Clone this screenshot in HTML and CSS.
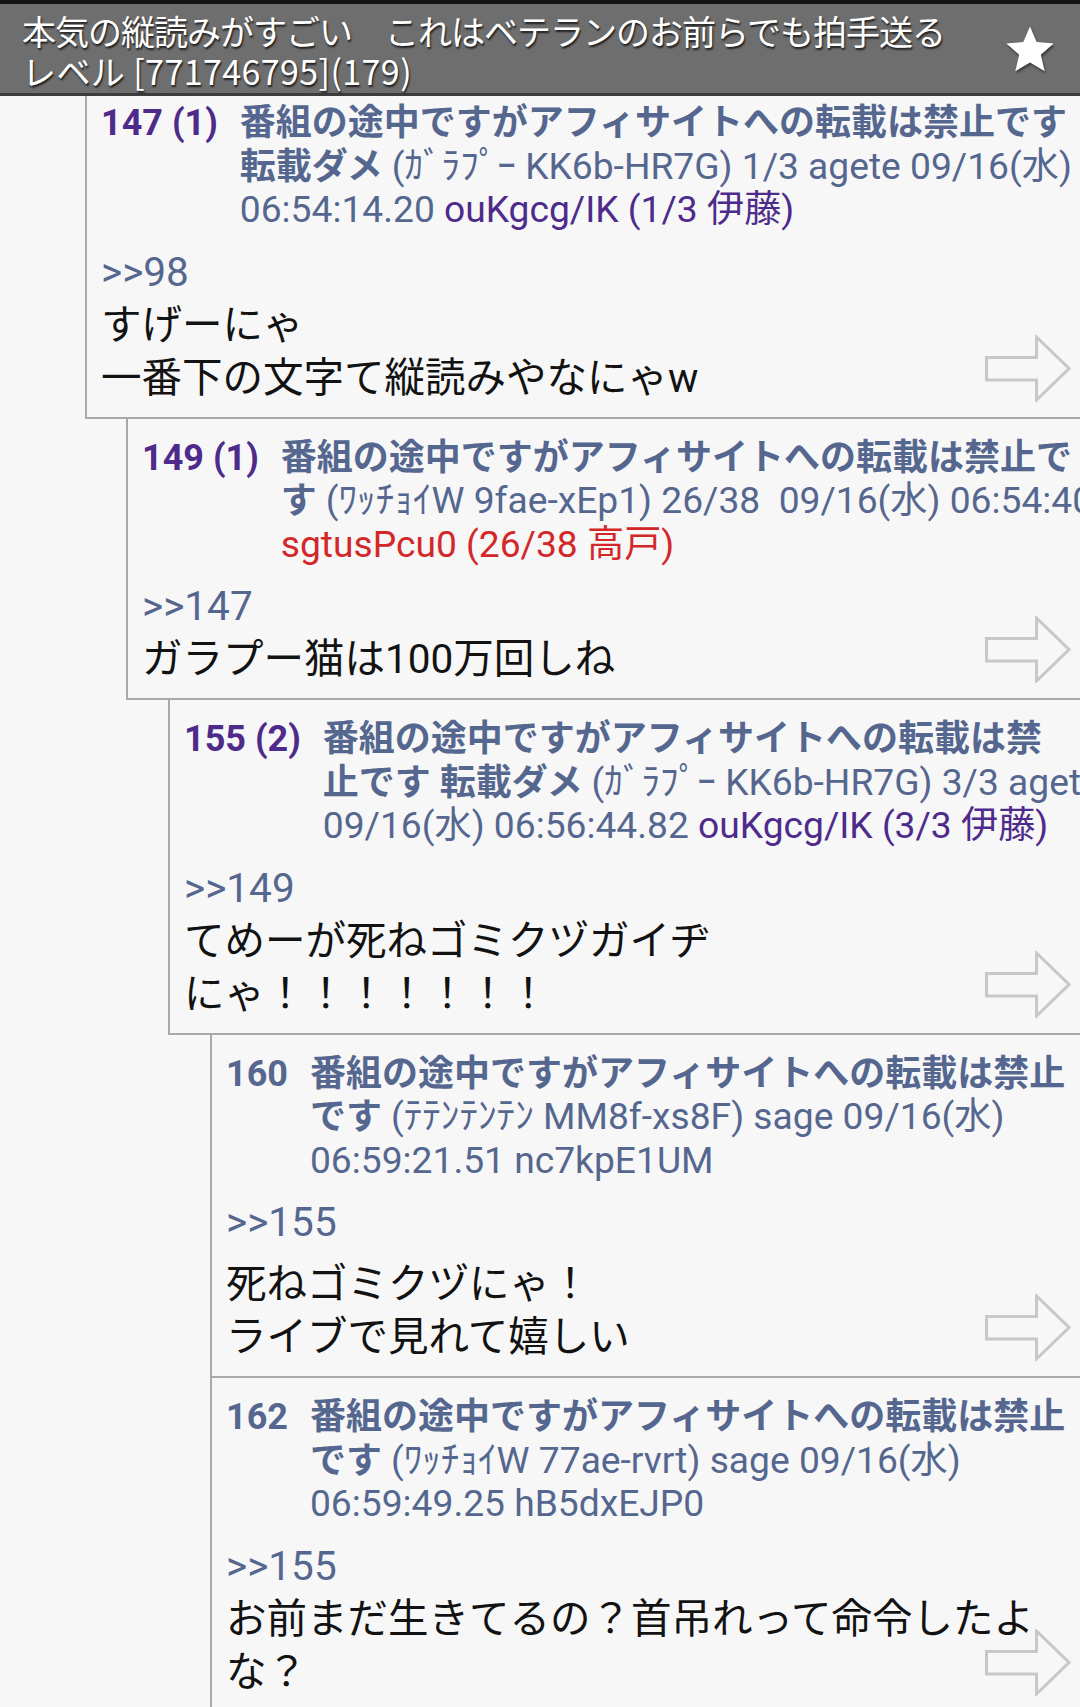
FILE: index.html
```html
<!DOCTYPE html>
<html lang="ja">
<head>
<meta charset="utf-8">
<title>thread</title>
<link rel="stylesheet" href="styles.css">
</head>
<body>
<header class="appbar">
  <div class="title">本気の縦読みがすごい　これはベテランのお前らでも拍手送る<br><span class="sub">レベル [771746795](179)</span></div>
  <svg class="star" viewBox="0 0 24 24"><path d="M12 1.6l3.1 7.2 7.8.7-5.9 5.1 1.8 7.7L12 18.2l-6.8 4.1 1.8-7.7-5.9-5.1 7.8-.7z"/></svg>
</header>
<main class="thread">
  <article class="post d1">
    <div class="head">
      <span class="num replied">147 (1)</span>
      <div class="lines">
        <div><b>番組の途中ですがアフィサイトへの転載は禁止です</b></div>
        <div><b>転載ダメ</b> <span class="meta">(ｶﾞﾗﾌﾟｰ KK6b-HR7G) 1/3 agete 09/16(水)</span></div>
        <div><span class="meta">06:54:14.20 <span class="id">ouKgcg/IK (1/3 伊藤)</span></span></div>
      </div>
    </div>
    <div class="body">
      <div class="anchor">&gt;&gt;98</div>
      <div>すげーにゃ</div>
      <div>一番下の文字て縦読みやなにゃw</div>
    </div>
    <svg class="next" viewBox="0 0 86 67"><path d="M1.5 22.5H51.5V2L84 33.5 51.5 65V45H1.5Z"/></svg>
  </article>
  <article class="post d2">
    <div class="head">
      <span class="num replied">149 (1)</span>
      <div class="lines">
        <div><b>番組の途中ですがアフィサイトへの転載は禁止で</b></div>
        <div><b>す</b> <span class="meta">(ﾜｯﾁｮｲW 9fae-xEp1) 26/38&nbsp; 09/16(水) 06:54:40.96</span></div>
        <div><span class="meta id red">sgtusPcu0 (26/38 高戸)</span></div>
      </div>
    </div>
    <div class="body">
      <div class="anchor">&gt;&gt;147</div>
      <div>ガラプー猫は100万回しね</div>
    </div>
    <svg class="next" viewBox="0 0 86 67"><path d="M1.5 22.5H51.5V2L84 33.5 51.5 65V45H1.5Z"/></svg>
  </article>
  <article class="post d3">
    <div class="head">
      <span class="num replied">155 (2)</span>
      <div class="lines">
        <div><b>番組の途中ですがアフィサイトへの転載は禁</b></div>
        <div><b>止です 転載ダメ</b> <span class="meta">(ｶﾞﾗﾌﾟｰ KK6b-HR7G) 3/3 agete</span></div>
        <div><span class="meta">09/16(水) 06:56:44.82 <span class="id">ouKgcg/IK (3/3 伊藤)</span></span></div>
      </div>
    </div>
    <div class="body">
      <div class="anchor">&gt;&gt;149</div>
      <div>てめーが死ねゴミクヅガイヂ</div>
      <div>にゃ！！！！！！！</div>
    </div>
    <svg class="next" viewBox="0 0 86 67"><path d="M1.5 22.5H51.5V2L84 33.5 51.5 65V45H1.5Z"/></svg>
  </article>
  <article class="post d4">
    <div class="head">
      <span class="num">160</span>
      <div class="lines">
        <div><b>番組の途中ですがアフィサイトへの転載は禁止</b></div>
        <div><b>です</b> <span class="meta">(ﾃﾃﾝﾃﾝﾃﾝ MM8f-xs8F) sage 09/16(水)</span></div>
        <div><span class="meta">06:59:21.51 nc7kpE1UM</span></div>
      </div>
    </div>
    <div class="body">
      <div class="anchor">&gt;&gt;155</div>
      <div class="spaced">死ねゴミクヅにゃ！</div>
      <div>ライブで見れて嬉しい</div>
    </div>
    <svg class="next" viewBox="0 0 86 67"><path d="M1.5 22.5H51.5V2L84 33.5 51.5 65V45H1.5Z"/></svg>
  </article>
  <article class="post d4">
    <div class="head">
      <span class="num">162</span>
      <div class="lines">
        <div><b>番組の途中ですがアフィサイトへの転載は禁止</b></div>
        <div><b>です</b> <span class="meta">(ﾜｯﾁｮｲW 77ae-rvrt) sage 09/16(水)</span></div>
        <div><span class="meta">06:59:49.25 hB5dxEJP0</span></div>
      </div>
    </div>
    <div class="body">
      <div class="anchor">&gt;&gt;155</div>
      <div>お前まだ生きてるの？首吊れって命令したよな？</div>
    </div>
    <svg class="next" viewBox="0 0 86 67"><path d="M1.5 22.5H51.5V2L84 33.5 51.5 65V45H1.5Z"/></svg>
  </article>
</main>
</body>
</html>
```
FILE: styles.css
```css
html, body {
  margin: 0;
  padding: 0;
  background: #f7f7f7;
}
body {
  width: 1080px;
  height: 1707px;
  overflow: hidden;
  font-family: Roboto, "Noto Sans CJK JP", sans-serif;
}
.appbar {
  position: relative;
  z-index: 2;
  display: flex;
  align-items: center;
  height: 89px;
  border-top: 4px solid #141414;
  border-bottom: 3px solid #3d3d3d;
  background: #6e6e6e;
  padding: 0 24px 0 22px;
}
.title {
  flex: 1;
  padding-top: 5px;
  font-family: "Noto Sans CJK JP", sans-serif;
  font-size: 34px;
  letter-spacing: -1px;
  line-height: 40px;
  color: #ffffff;
  white-space: nowrap;
  text-shadow: 1px 2px 2px rgba(0, 0, 0, 0.75);
}
.title .sub {
  letter-spacing: 0.4px;
}
.star {
  width: 52px;
  height: 52px;
  fill: #ffffff;
  filter: drop-shadow(1px 2px 1px rgba(0, 0, 0, 0.5));
}
.thread {
  margin-top: -12px;
  overflow: hidden;
}
.post {
  position: relative;
  border-left: 2px solid #a9a9a9;
  border-bottom: 2px solid #a9a9a9;
  padding: 18px 30px 12px 14px;
}
.d1 { margin-left: 85px; }
.d2 { margin-left: 126px; }
.d3 { margin-left: 168px; }
.d4 { margin-left: 210px; }
.head {
  display: flex;
  gap: 22px;
  font-size: 36px;
  line-height: 43.5px;
  color: #55678f;
}
.num {
  font-weight: 700;
  white-space: nowrap;
}
.num.replied {
  color: #4e2b8b;
}
.lines {
  white-space: nowrap;
}
.lines > div {
  height: 43.5px;
}
.lines b {
  font-weight: 700;
}
.meta {
  font-size: 37.2px;
  line-height: 30px;
}
.id {
  color: #4e2b8b;
}
.id.red {
  color: #d3282a;
}
.body {
  margin-top: 13px;
  font-size: 40.5px;
  line-height: 53px;
  color: #121212;
}
.body .spaced {
  padding-top: 9px;
}
.anchor {
  color: #55678f;
}
.next {
  position: absolute;
  right: 9px;
  bottom: 15px;
  width: 86px;
  height: 67px;
  fill: none;
  stroke: #c8c8c8;
  stroke-width: 3;
}
```
